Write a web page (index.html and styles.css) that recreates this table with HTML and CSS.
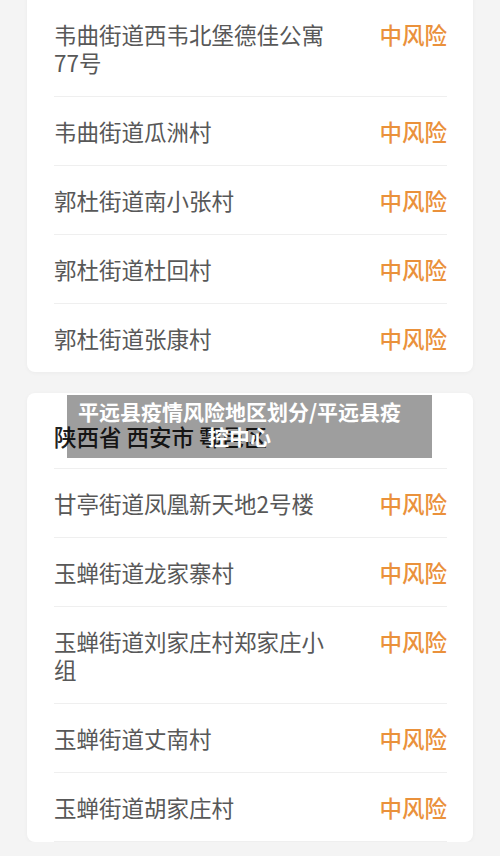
FILE: index.html
```html
<!DOCTYPE html>
<html lang="zh-CN">
<head>
    <meta charset="UTF-8">
    <meta name="viewport" content="width=device-width, initial-scale=1.0">
    <title>平远县疫情风险地区划分</title>
    <link rel="stylesheet" href="styles.css">
</head>
<body>
    <main class="list">
        <section class="card">
            <h3 class="card-title">陕西省 西安市 长安区</h3>
            <div class="row">
                <span class="place">韦曲街道西韦北堡德佳公寓77号</span>
                <span class="risk">中风险</span>
            </div>
            <div class="row">
                <span class="place">韦曲街道瓜洲村</span>
                <span class="risk">中风险</span>
            </div>
            <div class="row">
                <span class="place">郭杜街道南小张村</span>
                <span class="risk">中风险</span>
            </div>
            <div class="row">
                <span class="place">郭杜街道杜回村</span>
                <span class="risk">中风险</span>
            </div>
            <div class="row">
                <span class="place">郭杜街道张康村</span>
                <span class="risk">中风险</span>
            </div>
        </section>

        <section class="card card-second">
            <h3 class="card-title">陕西省 西安市 鄠邑区</h3>
            <div class="row">
                <span class="place">甘亭街道凤凰新天地2号楼</span>
                <span class="risk">中风险</span>
            </div>
            <div class="row">
                <span class="place">玉蝉街道龙家寨村</span>
                <span class="risk">中风险</span>
            </div>
            <div class="row">
                <span class="place">玉蝉街道刘家庄村郑家庄小组</span>
                <span class="risk">中风险</span>
            </div>
            <div class="row">
                <span class="place">玉蝉街道丈南村</span>
                <span class="risk">中风险</span>
            </div>
            <div class="row">
                <span class="place">玉蝉街道胡家庄村</span>
                <span class="risk">中风险</span>
            </div>

            <div class="caption">平远县疫情风险地区划分/平远县疫控中心</div>
        </section>
    </main>
</body>
</html>
```

FILE: styles.css
```css
body {
    margin: 0;
    padding: 0;
    background: #f4f4f4;
    font-family: "Noto Sans CJK SC", "Noto Sans", sans-serif;
    color: #555;
}

.list {
    display: flex;
    flex-direction: column;
    gap: 21px;
    margin-top: -76px;
    padding: 0 27px;
}

.card {
    position: relative;
    background: #fff;
    border-radius: 8px;
    padding: 0 26px 0 27px;
    box-shadow: 0 1px 4px rgba(0, 0, 0, 0.04);
}

.card-title {
    margin: 0;
    padding: 29px 0 18px;
    font-size: 22.5px;
    line-height: 28px;
    font-weight: 500;
    color: #222;
    border-bottom: 1px solid #efefef;
}

.row {
    display: flex;
    justify-content: space-between;
    align-items: flex-start;
    padding: 20px 0;
    border-bottom: 1px solid #efefef;
}

.row:last-of-type {
    border-bottom: none;
}

.place {
    width: 285px;
    font-size: 22.5px;
    line-height: 28px;
    color: #585858;
}

.risk {
    font-size: 22.5px;
    line-height: 28px;
    font-weight: 500;
    color: #ea913b;
}

/* caption pasted over the picture */
.caption {
    position: absolute;
    top: 2px;
    left: 40px;
    width: 333px;
    padding: 4px 26px 9px 6px;
    background: rgba(0, 0, 0, 0.38);
    color: #fff;
    font-size: 21px;
    line-height: 25px;
    font-weight: 700;
    text-align: center;
}
```
